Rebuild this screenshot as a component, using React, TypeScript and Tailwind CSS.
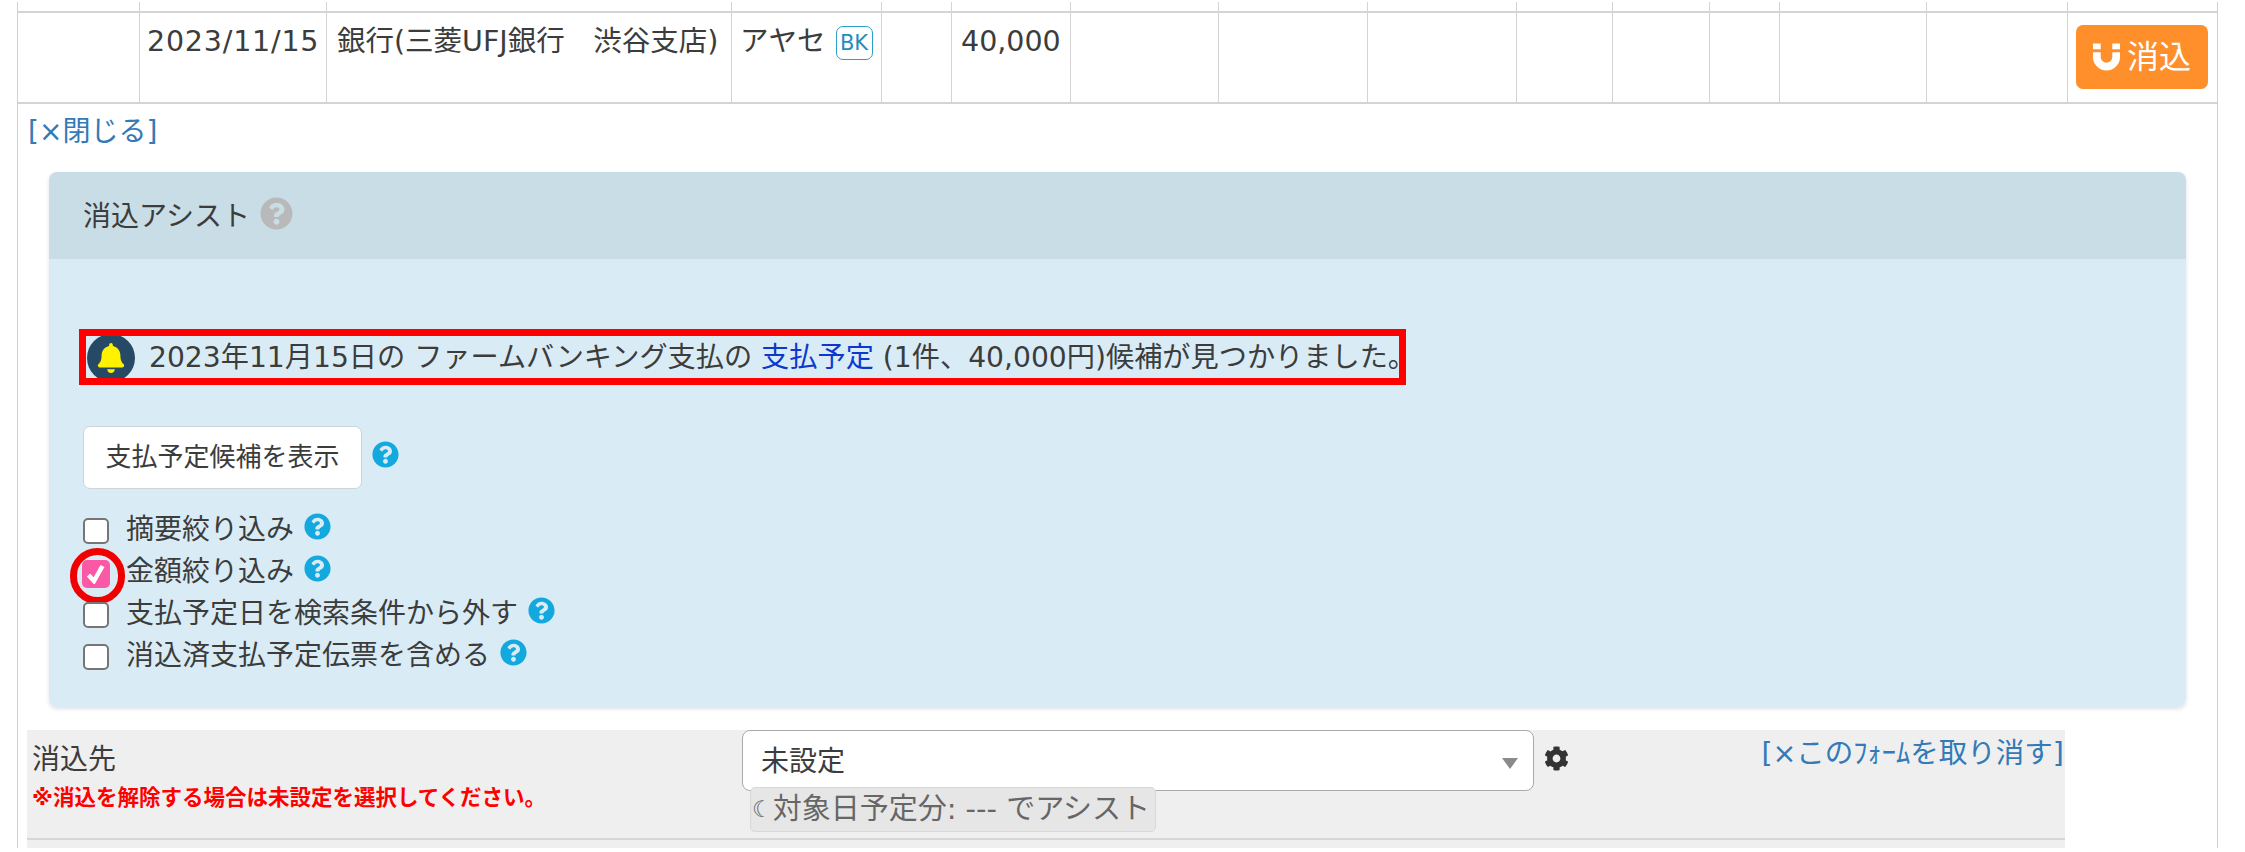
import { FaBell, FaCog, FaQuestionCircle } from 'react-icons/fa';

const cols = 'grid grid-cols-[122px_187px_405px_150px_70px_119px_148px_149px_149px_96px_97px_70px_147px_141px_149px]';
const cell = 'border-r border-[#d4d4d4] last:border-r-0';
const emptyCols = Array.from({ length: 15 });

function Help({ className }: { className: string }) {
  return <FaQuestionCircle className={className} />;
}

function Magnet() {
  return (
    <svg viewBox="0 0 28 28" className="h-[28px] w-[27px]" fill="#fff">
      <path d="M0 0h8v6H0zM20 0h8v6h-8z" />
      <path d="M0 9h8v5a6 6 0 0 0 12 0V9h8v5a14 14 0 0 1-28 0z" />
    </svg>
  );
}

function CheckRow({ label, checked, helpClass }: { label: string; checked?: boolean; helpClass: string }) {
  return (
    <div className="relative flex h-[42px] items-center">
      {checked ? (
        <span className="-ml-[1px] -mr-[1px] flex h-[28px] w-[28px] translate-y-[2px] items-center justify-center rounded-[5px] bg-[#fb58a6]">
          <svg viewBox="0 0 20 20" className="h-[20px] w-[20px]" fill="none" stroke="#fff" strokeWidth="4.5">
            <path d="M2.5 11 L8 17 L16.5 2" />
          </svg>
        </span>
      ) : (
        <span className="h-[26px] w-[26px] translate-y-[1px] rounded-[5px] border-2 border-[#767676] bg-white" />
      )}
      <span className="ml-[17px] text-[28px] leading-none">{label}</span>
      <Help className={helpClass} />
      {checked && (
        <span className="absolute -left-[13px] -top-[3px] h-[56px] w-[55px] rounded-full border-[7px] border-[#f00000]" />
      )}
    </div>
  );
}

export default function App() {
  return (
    <div className="h-[852px] w-[2245px] overflow-hidden bg-white pt-[2px] pl-[17px] font-['DejaVu_Sans','Noto_Sans_CJK_JP',sans-serif] text-[#3c3c3c]">
      <div className="h-[846px] w-[2201px] border-x border-[#d0d0d0]">
        {/* cut off row above */}
        <div className={`${cols} h-[9px]`}>
          {emptyCols.map((_, i) => (
            <div key={i} className={cell} />
          ))}
        </div>

        {/* table row */}
        <div className={`${cols} h-[93px] border-y-2 border-[#d4d4d4] text-[28.5px] leading-none`}>
          <div className={cell} />
          <div className={`${cell} pl-[7px] pt-[15px] tracking-[0.8px] whitespace-nowrap`}>2023/11/15</div>
          <div className={`${cell} pl-[10px] pt-[15px] whitespace-nowrap`}>銀行(三菱UFJ銀行　渋谷支店)</div>
          <div className={`${cell} flex items-start pl-[8px] pt-[15px]`}>
            <span>アヤセ</span>
            <span className="-mt-[2px] ml-[10px] flex h-[34px] w-[37px] items-center justify-center rounded-[7px] border border-[#2a9fc9] text-[21px] text-[#1d8fbd]">BK</span>
          </div>
          <div className={cell} />
          <div className={`${cell} pl-[9px] pt-[15px]`}>40,000</div>
          {emptyCols.slice(0, 8).map((_, i) => (
            <div key={i} className={cell} />
          ))}
          <div className="pl-[8px] pt-[12px]">
            <button className="flex h-[64px] w-[132px] items-center justify-center gap-[7px] rounded-[7px] bg-[#ff8f2b] text-[32px] text-white">
              <Magnet />
              消込
            </button>
          </div>
        </div>

        <div className="flex h-[56px] items-center pl-[10px] text-[28px] text-[#337ab7]">[×閉じる]</div>

        {/* 消込アシスト */}
        <div className="ml-[31px] mt-[12px] w-[2137px] rounded-[8px] shadow-[0_2px_4px_rgba(0,0,0,0.12)]">
          <div className="flex h-[87px] items-center rounded-t-[8px] bg-[#c9dde6] pl-[34px] text-[28px]">
            <span className="translate-y-[1px]">消込アシスト</span>
            <Help className="ml-[10px] h-[33px] w-[33px] -translate-y-[2px] text-[#b9b9b9]" />
          </div>
          <div className="h-[448px] rounded-b-[8px] bg-[#d9ecf6] pl-[34px] pt-[75px]">
            <div className="relative flex h-[48px] items-center text-[28.2px] whitespace-nowrap">
              <span className="ml-[4px] flex h-[48px] w-[48px] items-center justify-center rounded-full bg-[#264a66]">
                <FaBell className="h-[30px] w-[28px] text-[#fff200]" />
              </span>
              <span className="ml-[14px]">
                2023年11月15日の ファームバンキング支払の <span className="text-[#0b39d0]">支払予定</span> (1件、40,000円)候補が見つかりました。
              </span>
              <span className="absolute -left-[4px] -top-[5px] h-[56px] w-[1327px] border-[7px] border-[#ff0000]" />
            </div>

            <div className="mt-[44px] flex items-center">
              <button className="h-[63px] w-[279px] rounded-[7px] border border-[#cfd4d8] bg-white text-[26px]">支払予定候補を表示</button>
              <Help className="ml-[10px] h-[27px] w-[27px] -translate-y-[3px] text-[#13a9de]" />
            </div>

            <div className="mt-[20px]">
              <CheckRow label="摘要絞り込み" helpClass="ml-[10px] h-[27px] w-[27px] -translate-y-[4px] text-[#13a9de]" />
              <CheckRow label="金額絞り込み" checked helpClass="ml-[10px] h-[27px] w-[27px] -translate-y-[4px] text-[#13a9de]" />
              <CheckRow label="支払予定日を検索条件から外す" helpClass="ml-[10px] h-[27px] w-[27px] -translate-y-[4px] text-[#13a9de]" />
              <CheckRow label="消込済支払予定伝票を含める" helpClass="ml-[10px] h-[27px] w-[27px] -translate-y-[4px] text-[#13a9de]" />
            </div>
          </div>
        </div>

        {/* 消込先 */}
        <div className="ml-[9px] mt-[23px] w-[2038px] bg-[#efefef] pb-[8px]">
          <div className="flex h-[110px] border-b-2 border-[#d6d6d6]">
            <div className="w-[715px] pl-[5px] pt-[15px]">
              <div className="text-[28px] leading-[30px]">消込先</div>
              <div className="mt-[8px] text-[21.5px] font-bold leading-[30px] text-[#ff0000] whitespace-nowrap">※消込を解除する場合は未設定を選択してください。</div>
            </div>
            <div className="w-[792px]">
              <div className="relative flex h-[61px] items-center rounded-[8px] border border-[#aaaaaa] bg-white pl-[18px] text-[28px]">
                <span className="translate-y-[1px]">未設定</span>
                <span className="absolute right-[15px] top-[27px] h-0 w-0 border-x-[8px] border-t-[11px] border-x-transparent border-t-[#8a8a8a]" />
              </div>
              <div className="relative -mt-[4px] ml-[8px] flex h-[45px] w-[406px] items-center whitespace-nowrap rounded-[5px] border border-[#d8d8d8] bg-[#e6e6e6] pl-[1px] text-[29px] text-[#666666]">
                <span className="text-[23px]">☾</span>
                <span>対象日予定分: --- でアシスト</span>
              </div>
            </div>
            <FaCog className="ml-[10px] mt-[16px] h-[25px] w-[25px] text-[#333333]" />
            <div className="ml-auto whitespace-nowrap pr-[1px] pt-[3px] text-[28.5px] text-[#337ab7]">[×このﾌｫｰﾑを取り消す]</div>
          </div>
        </div>
      </div>
    </div>
  );
}
